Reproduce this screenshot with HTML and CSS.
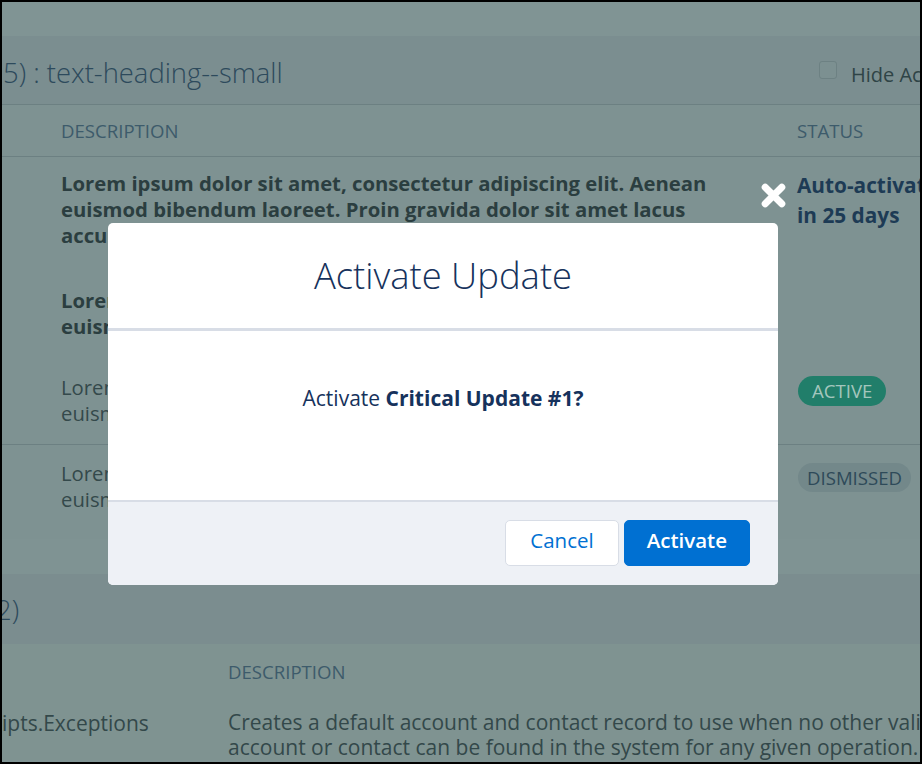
FILE: index.html
```html
<!DOCTYPE html>
<html lang="en">
<head>
<meta charset="utf-8">
<title>Activate Update</title>
<link rel="stylesheet" href="styles.css">
</head>
<body>
<div class="frame">
  <div class="topbar"></div>

  <section class="card">
    <header class="card-header">
      <h2 class="card-title">5) : text-heading--small</h2>
      <label class="hide"><span class="checkbox"></span>Hide Activated</label>
    </header>
    <div class="thead">
      <div></div>
      <div>DESCRIPTION</div>
      <div>STATUS</div>
    </div>
    <div class="row row-1 strong">
      <div></div>
      <div>Lorem ipsum dolor sit amet, consectetur adipiscing elit. Aenean<br>euismod bibendum laoreet. Proin gravida dolor sit amet lacus<br>accumsan et viverra justo commodo.</div>
      <div class="status">Auto-activates<br>in 25 days</div>
    </div>
    <div class="row row-2 strong">
      <div></div>
      <div>Lorem ipsum dolor sit amet, consectetur adipiscing elit. Aenean<br>euismod bibendum laoreet.</div>
      <div></div>
    </div>
    <div class="row row-3">
      <div></div>
      <div>Lorem ipsum dolor sit amet, consectetur adipiscing elit. Aenean<br>euismod bibendum laoreet.</div>
      <div><span class="badge badge-active">Active</span></div>
    </div>
    <div class="row row-4">
      <div></div>
      <div>Lorem ipsum dolor sit amet, consectetur adipiscing elit. Aenean<br>euismod bibendum laoreet.</div>
      <div><span class="badge badge-dismissed">Dismissed</span></div>
    </div>
  </section>

  <section class="card card-2">
    <header class="card-header card-header-2">
      <h2 class="card-title title-2">2)</h2>
    </header>
    <div class="thead thead-2">
      <div></div>
      <div>DESCRIPTION</div>
    </div>
    <div class="row row-class">
      <div class="class-name">ipts.Exceptions</div>
      <div>Creates a default account and contact record to use when no other valid<br>account or contact can be found in the system for any given operation.</div>
    </div>
  </section>

  <div class="modal" role="dialog" aria-labelledby="modal-heading">
    <button class="modal-close" type="button" aria-label="Close">
      <svg viewBox="0 0 25 25" width="25" height="25" aria-hidden="true"><path d="M4.2 4.2L20.8 20.8M20.8 4.2L4.2 20.8"/></svg>
    </button>
    <div class="modal-header">
      <h2 class="modal-title" id="modal-heading">Activate Update</h2>
    </div>
    <div class="modal-body">Activate <strong>Critical Update #1?</strong></div>
    <div class="modal-footer">
      <button class="btn btn-neutral" type="button">Cancel</button>
      <button class="btn btn-brand" type="button">Activate</button>
    </div>
  </div>
</div>
</body>
</html>
```

FILE: styles.css
```css
html, body {
  margin: 0;
  padding: 0;
}

body {
  font-family: "Open Sans", "Liberation Sans", sans-serif;
  background: #000;
}

.frame {
  position: relative;
  width: 922px;
  height: 764px;
  box-sizing: border-box;
  border: 2px solid #000;
  overflow: hidden;
  background: #7f9393;
}

.topbar {
  height: 34px;
  background: #809494;
}

/* ---------- card ---------- */
.card {
  background: #7e9292;
  margin-bottom: 35px;
}

.card-header {
  display: grid;
  grid-template-columns: 818px 1fr;
  align-items: center;
  height: 69px;
  box-sizing: border-box;
  padding: 5px 0 0 1px;
  background: #7b8e90;
  border-bottom: 1px solid #6c8082;
}

.card-title {
  margin: 0;
  font-size: 27.4px;
  font-weight: 300;
  line-height: 36px;
  color: #2d4a5c;
  white-space: nowrap;
}

.hide {
  display: flex;
  align-items: center;
  gap: 14px;
  font-size: 20px;
  color: #2f4446;
  white-space: nowrap;
  padding-top: 3px;
}

.checkbox {
  width: 18px;
  height: 18px;
  box-sizing: border-box;
  border: 1px solid #6d8183;
  border-radius: 3px;
  background: #7c9091;
  margin-top: -8px;
  margin-left: -2px;
}

.thead {
  display: grid;
  grid-template-columns: 59px 736px 1fr;
  align-items: center;
  height: 52px;
  box-sizing: border-box;
  border-bottom: 1px solid #6c8082;
  font-size: 18.6px;
  color: #3d5b6b;
  white-space: nowrap;
}

.row {
  display: grid;
  grid-template-columns: 59px 736px 1fr;
  align-items: start;
  font-size: 20.3px;
  line-height: 26px;
  color: #34494b;
  white-space: nowrap;
}

.strong {
  font-weight: 700;
  color: #2b3e40;
}

.row-1 { padding: 13px 0 20px; }
.row-2 { padding: 19px 0 16px; }
.row-3 { padding: 19px 0 18px; border-bottom: 1px solid #6c8082; }
.row-4 { padding: 15px 0 27px; }

.status {
  font-size: 20.8px;
  font-weight: 700;
  line-height: 30px;
  color: #1d3b55;
}

.badge {
  display: inline-block;
  margin-top: 2px;
  margin-left: 1px;
  height: 30px;
  padding: 0 10px;
  border-radius: 15px;
  font-size: 18.6px;
  line-height: 30px;
  font-weight: 400;
  text-transform: uppercase;
}

.badge-active {
  padding: 0 14px;
  background: #217e6a;
  color: #a4c6bd;
}

.badge-dismissed {
  margin-top: 3px;
  height: 29px;
  line-height: 29px;
  padding: 0 9px;
  background: #73888a;
  color: #2e4a59;
}

/* ---------- second card ---------- */
.card-2 {
  background: #7f9391;
  margin-bottom: 0;
}

.card-header-2 {
  height: 70px;
  padding-top: 2px;
  border-bottom: 0;
  background: #7b8d8f;
}

.title-2 {
  margin-left: -7px;
}

.thead-2 {
  grid-template-columns: 226px 1fr;
  height: auto;
  padding-top: 15px;
  line-height: 26px;
  border-bottom: 0;
}

.row-class {
  grid-template-columns: 226px 1fr;
  padding-top: 25px;
  font-size: 21px;
  line-height: 25px;
  color: #33484a;
}

.class-name {
  padding-top: 1px;
}

/* ---------- modal ---------- */
.modal {
  position: absolute;
  left: 106px;
  top: 221px;
  width: 670px;
  background: #fff;
  border-radius: 5px;
}

.modal-close {
  position: absolute;
  top: -40px;
  right: -8px;
  width: 25px;
  height: 25px;
  padding: 0;
  border: 0;
  background: none;
}

.modal-close svg {
  display: block;
  fill: none;
  stroke: #fff;
  stroke-width: 7;
  stroke-linecap: round;
}

.modal-header {
  padding: 31px 16px;
  border-bottom: 3px solid #d8dde6;
  text-align: center;
}

.modal-title {
  margin: 0;
  font-size: 36.4px;
  font-weight: 300;
  line-height: 43px;
  color: #16325c;
}

.modal-body {
  padding: 52px 16px 87px;
  text-align: center;
  font-size: 21px;
  line-height: 30px;
  color: #16325c;
}

.modal-body strong {
  font-weight: 700;
}

.modal-footer {
  display: flex;
  justify-content: flex-end;
  gap: 5px;
  padding: 18px 28px 19px;
  border-top: 2px solid #d8dde6;
  background: #eef1f6;
  border-radius: 0 0 5px 5px;
}

.btn {
  height: 46px;
  box-sizing: border-box;
  padding: 0 24px 6px;
  border-radius: 5px;
  font-family: inherit;
  font-size: 20.5px;
  line-height: 38px;
}

.btn-neutral {
  background: #fff;
  border: 1px solid #d8dde6;
  color: #0070d2;
}

.btn-brand {
  padding: 0 22px 6px;
  background: #0070d2;
  border: 1px solid #0070d2;
  color: #fff;
  font-weight: 600;
}
```
